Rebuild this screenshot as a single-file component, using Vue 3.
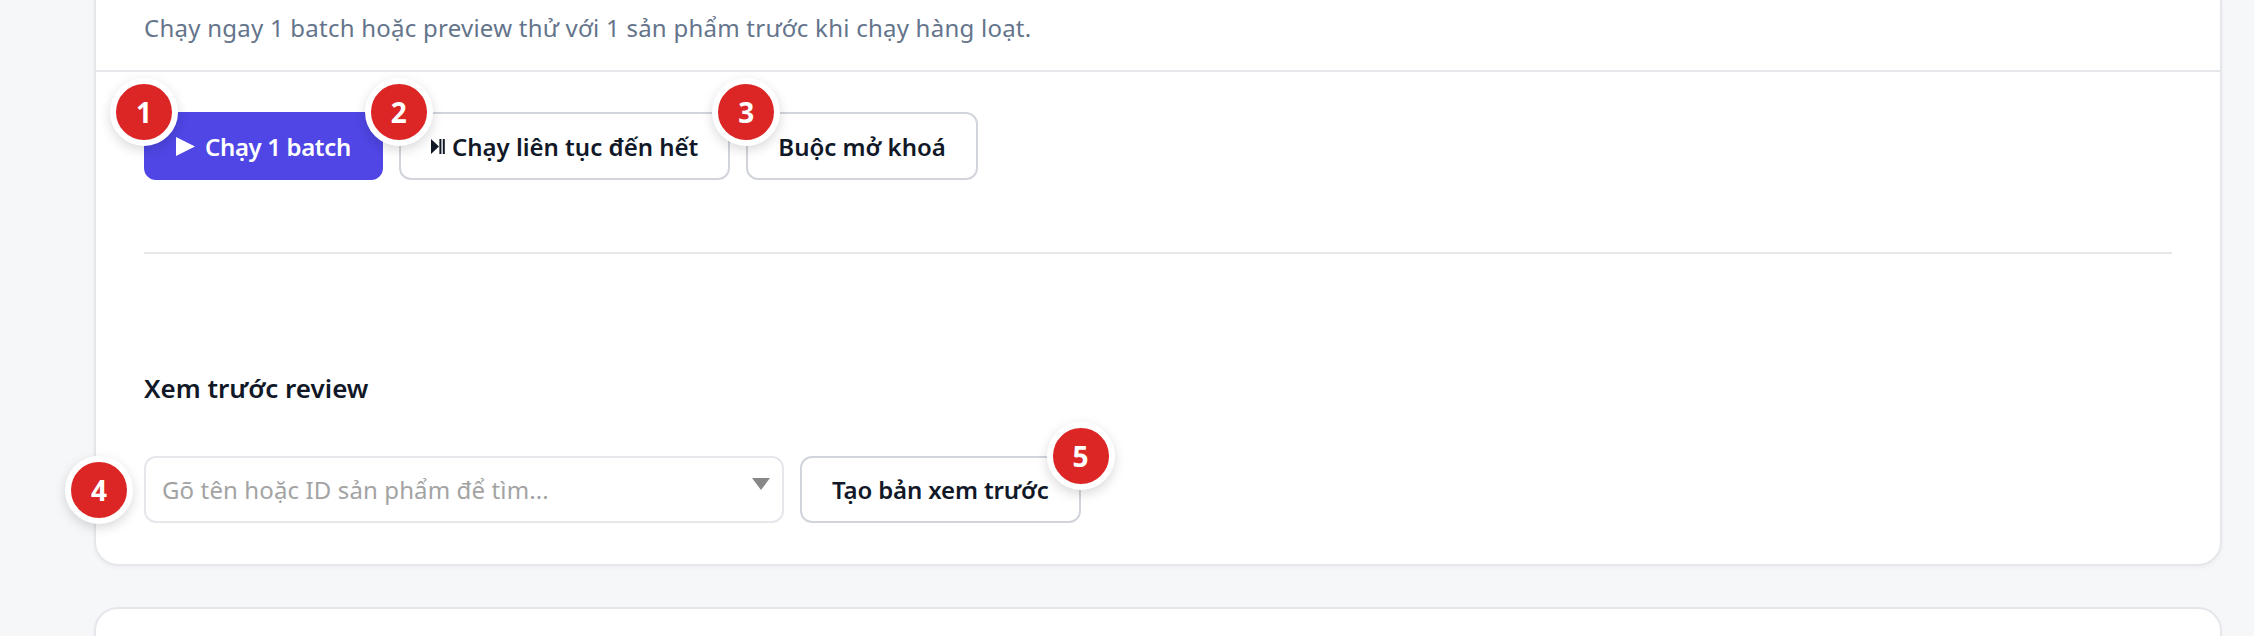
<script setup>
const actions = [
  { n: 1, label: 'Chạy 1 batch', icon: 'play', primary: true },
  { n: 2, label: 'Chạy liên tục đến hết', icon: 'playpause' },
  { n: 3, label: 'Buộc mở khoá' },
]
</script>

<template>
  <div class="page">
    <section class="card first">
      <header class="head">
        <p class="desc">Chạy ngay 1 batch hoặc preview thử với 1 sản phẩm trước khi chạy hàng loạt.</p>
      </header>
      <div class="body">
        <div class="actions">
          <button v-for="a in actions" :key="a.n" class="btn" :class="{ primary: a.primary }">
            <span class="badge tl">{{ a.n }}</span>
            <svg v-if="a.icon === 'play'" class="ic-play" viewBox="0 0 19 19"><path d="M0 0L19 9.5L0 19Z" fill="#fff" /></svg>
            <svg v-if="a.icon === 'playpause'" class="ic-pp" viewBox="0 0 14 15">
              <path d="M0 0L8 7.5L0 15Z" fill="#111827" />
              <rect x="8.4" y="0" width="2" height="15" fill="#111827" />
              <rect x="11.8" y="0" width="2" height="15" fill="#111827" />
            </svg>
            <span class="label">{{ a.label }}</span>
          </button>
        </div>
        <hr class="divider" />
        <h3 class="title">Xem trước review</h3>
        <div class="preview">
          <div class="select">
            <span class="badge left">4</span>
            <span class="placeholder">Gõ tên hoặc ID sản phẩm để tìm...</span>
            <svg class="caret" viewBox="0 0 18 12"><path d="M0 0H18L9 12Z" fill="#888" /></svg>
          </div>
          <button class="btn preview-btn">
            <span class="badge tr">5</span>
            <span class="label">Tạo bản xem trước</span>
          </button>
        </div>
      </div>
    </section>
    <section class="card second"></section>
  </div>
</template>

<style>
html, body { margin: 0; background: #f6f7f9; }
</style>

<style scoped>
.page {
  height: 636px;
  overflow: hidden;
  padding: 0 32px 0 94px;
  background: #f6f7f9;
  font-family: "Noto Sans", "Open Sans", sans-serif;
  box-sizing: border-box;
}
.card {
  background: #fff;
  border: 2px solid #e5e7eb;
  border-radius: 24px;
  box-shadow: 0 2px 4px rgba(0, 0, 0, 0.04);
}
.first {
  border-top: 0;
  border-radius: 0 0 24px 24px;
  height: 566px;
  box-sizing: border-box;
}
.second { margin-top: 41px; height: 100px; }
.head {
  border-bottom: 2px solid #e5e7eb;
  padding: 12px 48px 0;
  height: 58px;
}
.desc { margin: 0; font-size: 24px; line-height: 32px; letter-spacing: 0.24px; color: #64748b; }
.body { padding: 40px 48px 0; }
.actions { display: flex; gap: 16px; }
.btn {
  position: relative;
  height: 68px;
  padding: 0 30px;
  display: inline-flex;
  align-items: center;
  gap: 10px;
  border: 2px solid #d1d5db;
  border-radius: 12px;
  background: #fff;
  color: #111827;
  font: 600 24px "Noto Sans", "Open Sans", sans-serif;
  box-sizing: border-box;
  white-space: nowrap;
}
.primary { background: #4f46e5; border-color: #4f46e5; color: #fff; letter-spacing: -0.36px; }
.ic-play { width: 19px; height: 19px; }
.ic-pp { width: 14px; height: 15px; margin-right: -3px; }
.badge {
  position: absolute;
  width: 68px;
  height: 68px;
  box-sizing: border-box;
  border: 6px solid #fff;
  border-radius: 50%;
  background: #dc2626;
  color: #fff;
  font: 700 28px "Noto Sans", sans-serif;
  letter-spacing: 0;
  display: flex;
  align-items: center;
  justify-content: center;
  box-shadow: 0 4px 12px rgba(0, 0, 0, 0.15);
  z-index: 2;
}
.tl { left: -36px; top: -36px; }
.tr { right: -36px; top: -36px; }
.left { left: -81px; top: 0; bottom: 0; margin: auto 0; }
.divider {
  border: 0;
  height: 2px;
  background: #e5e7eb;
  margin: 72px 0 0;
}
.title {
  margin: 112px 0 0;
  font-size: 26px;
  line-height: 44px;
  font-weight: 600;
  color: #111827;
}
.preview { display: flex; gap: 16px; margin-top: 46px; }
.select {
  position: relative;
  width: 640px;
  height: 67px;
  box-sizing: border-box;
  border: 2px solid #e5e7eb;
  border-radius: 12px;
  background: #fff;
  display: flex;
  align-items: center;
  padding: 0 16px;
}
.placeholder { font-size: 24px; letter-spacing: 0.12px; color: #a3a3a3; }
.caret { position: absolute; right: 12px; top: 20px; width: 18px; height: 12px; }
.preview-btn { height: 67px; letter-spacing: -0.15px; }
</style>
